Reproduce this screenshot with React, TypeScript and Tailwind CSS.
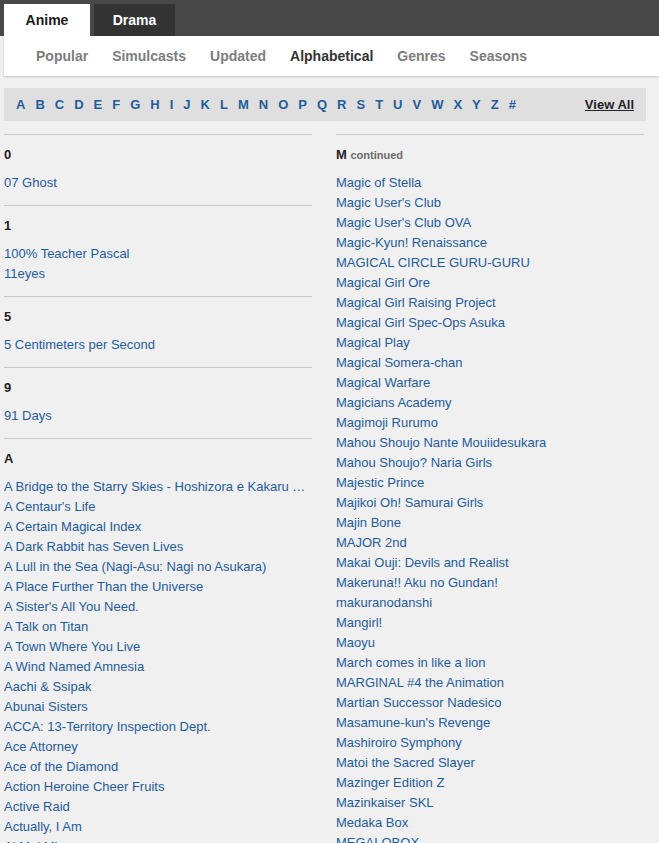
import React from 'react';

type Section = {
  heading: string;
  items: string[];
};

const LETTERS = ['A', 'B', 'C', 'D', 'E', 'F', 'G', 'H', 'I', 'J', 'K', 'L', 'M', 'N', 'O', 'P', 'Q', 'R', 'S', 'T', 'U', 'V', 'W', 'X', 'Y', 'Z', '#'];

const NAV = ['Popular', 'Simulcasts', 'Updated', 'Alphabetical', 'Genres', 'Seasons'];

const LEFT: Section[] = [
  { heading: '0', items: ['07 Ghost'] },
  { heading: '1', items: ['100% Teacher Pascal', '11eyes'] },
  { heading: '5', items: ['5 Centimeters per Second'] },
  { heading: '9', items: ['91 Days'] },
  {
    heading: 'A',
    items: [
      'A Bridge to the Starry Skies - Hoshizora e Kakaru Hashi',
      "A Centaur's Life",
      'A Certain Magical Index',
      'A Dark Rabbit has Seven Lives',
      'A Lull in the Sea (Nagi-Asu: Nagi no Asukara)',
      'A Place Further Than the Universe',
      "A Sister's All You Need.",
      'A Talk on Titan',
      'A Town Where You Live',
      'A Wind Named Amnesia',
      'Aachi & Ssipak',
      'Abunai Sisters',
      'ACCA: 13-Territory Inspection Dept.',
      'Ace Attorney',
      'Ace of the Diamond',
      'Action Heroine Cheer Fruits',
      'Active Raid',
      'Actually, I Am',
      'Ai Mai Mi',
    ],
  },
];

const RIGHT = [
  'Magic of Stella',
  "Magic User's Club",
  "Magic User's Club OVA",
  'Magic-Kyun! Renaissance',
  'MAGICAL CIRCLE GURU-GURU',
  'Magical Girl Ore',
  'Magical Girl Raising Project',
  'Magical Girl Spec-Ops Asuka',
  'Magical Play',
  'Magical Somera-chan',
  'Magical Warfare',
  'Magicians Academy',
  'Magimoji Rurumo',
  'Mahou Shoujo Nante Mouiidesukara',
  'Mahou Shoujo? Naria Girls',
  'Majestic Prince',
  'Majikoi Oh! Samurai Girls',
  'Majin Bone',
  'MAJOR 2nd',
  'Makai Ouji: Devils and Realist',
  'Makeruna!! Aku no Gundan!',
  'makuranodanshi',
  'Mangirl!',
  'Maoyu',
  'March comes in like a lion',
  'MARGINAL #4 the Animation',
  'Martian Successor Nadesico',
  "Masamune-kun's Revenge",
  'Mashiroiro Symphony',
  'Matoi the Sacred Slayer',
  'Mazinger Edition Z',
  'Mazinkaiser SKL',
  'Medaka Box',
  'MEGALOBOX',
];

const ItemList = ({ items }: { items: string[] }) => (
  <ul className="mt-[8px] mb-[12px]">
    {items.map(item => (
      <li key={item} className="h-[20px] leading-[20px] text-[13px] text-[#1f5c9c] truncate">
        {item}
      </li>
    ))}
  </ul>
);

export default function App() {
  return (
    <div className="min-h-screen bg-[#f0f0f0] font-['Liberation_Sans',Arial,sans-serif]">
      <div className="bg-[#484848] h-[36px] pl-[4px] pt-[4px] flex gap-[4px]">
        <div className="w-[86px] h-[32px] bg-white flex items-center justify-center text-[14px] font-bold text-[#1a1a1a]">Anime</div>
        <div className="w-[81px] h-[32px] bg-[#333333] flex items-center justify-center text-[14px] font-bold text-white">Drama</div>
      </div>
      <div className="ml-[4px] h-[40px] bg-white shadow-[0_1px_2px_rgba(0,0,0,0.2)] flex items-center pl-[32px] gap-[24px]">
        {NAV.map(n => (
          <span key={n} className={`text-[14px] font-bold ${n === 'Alphabetical' ? 'text-[#333333]' : 'text-[#7d7d7d]'}`}>
            {n}
          </span>
        ))}
      </div>
      <div className="pl-[4px] pr-[13px] pt-[12px]">
        <div className="h-[33px] bg-[#dfdfdf] flex items-center pl-[12px] pr-[12px]">
          <div className="flex gap-[10px] text-[13px] font-bold text-[#1f5c9c]">
            {LETTERS.map(l => (
              <span key={l}>{l}</span>
            ))}
          </div>
          <span className="ml-auto text-[13px] font-bold text-[#222] underline">View All</span>
        </div>
        <div className="flex gap-[24px] mt-[13px] pr-[1px]">
          <div className="w-[308px]">
            {LEFT.map(s => (
              <div key={s.heading} className="border-t border-[#c8c8c8] pt-[10px]">
                <h3 className="h-[20px] leading-[20px] text-[13px] font-bold text-[#222]">{s.heading}</h3>
                <ItemList items={s.items} />
              </div>
            ))}
          </div>
          <div className="w-[308px]">
            <div className="border-t border-[#c8c8c8] pt-[10px]">
              <h3 className="h-[20px] leading-[20px] text-[13px] font-bold text-[#222]">
                M <span className="text-[11px] text-[#6b6b6b]">continued</span>
              </h3>
              <ItemList items={RIGHT} />
            </div>
          </div>
        </div>
      </div>
    </div>
  );
}
